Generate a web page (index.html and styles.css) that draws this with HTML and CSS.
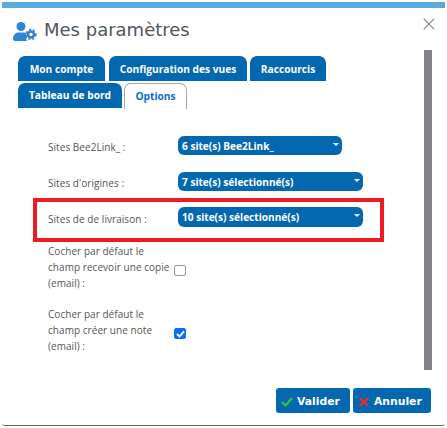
FILE: index.html
```html
<!DOCTYPE html>
<html lang="fr">
<head>
<meta charset="utf-8">
<title>Mes paramètres</title>
<link rel="stylesheet" href="styles.css">
</head>
<body>
<div class="topbar"></div>
<div class="dialog">
  <header class="head">
    <svg class="head-icon" width="24" height="19" viewBox="0 0 24 19"><circle cx="8" cy="4.500" r="4.500" fill="#2f86d6"/><path d="M0 17c0-4 2.500-6.500 5.500-6.500h5c1.300 0 2.500.4 3.400 1l-.9 1.500 1 2-.7 2.500.7 1.500H2c-1.200 0-2-.8-2-2z" fill="#2f86d6"/><circle cx="18" cy="12.500" r="3" fill="none" stroke="#2f7fc8" stroke-width="2.400"/><circle cx="18" cy="12.500" r="4.900" fill="none" stroke="#2f7fc8" stroke-width="1.500" stroke-dasharray="2.100 2.000"/></svg>
    <h1 class="title">Mes paramètres</h1>
    <svg class="close" width="12" height="12" viewBox="0 0 12 12"><path d="M.7.7l10.600 10.600M11.300.7L.7 11.300" stroke="#8a8a8a" stroke-width="1.200" fill="none"/></svg>
  </header>
  <div class="main">
    <div class="content">
      <div class="tabs">
        <div class="tab-row">
          <span class="tab w-compte">Mon compte</span>
          <span class="tab w-config">Configuration des vues</span>
          <span class="tab w-racc">Raccourcis</span>
        </div>
        <div class="tab-row">
          <span class="tab w-tableau">Tableau de bord</span>
          <span class="tab active">Options</span>
        </div>
      </div>
      <div class="form">
        <div class="row row-a"><span class="label">Sites Bee2Link_ :</span><span class="select w-short">6 site(s) Bee2Link_<i class="caret"></i></span></div>
        <div class="row row-b"><span class="label">Sites d'origines :</span><span class="select">7 site(s) sélectionné(s)<i class="caret"></i></span></div>
        <div class="row row-c"><span class="label">Sites de de livraison :</span><span class="select">10 site(s) sélectionné(s)<i class="caret"></i></span></div>
        <div class="check-row first"><span class="label multi">Cocher par défaut le<br>champ recevoir une copie<br>(email) :</span><span class="box"></span></div>
        <div class="check-row"><span class="label multi">Cocher par défaut le<br>champ créer une note<br>(email) :</span><span class="box checked"><svg width="9" height="8" viewBox="0 0 9 8"><path d="M1 4l2.500 2.500L8 1.300" stroke="#fff" stroke-width="1.800" fill="none"/></svg></span></div>
      </div>
    </div>
    <div class="scrollbar"></div>
  </div>
  <footer class="foot">
    <span class="btn btn-ok"><svg width="12" height="10" viewBox="0 0 12 10"><path d="M1 5l3.500 3.500L11 1" stroke="#35c72c" stroke-width="2" fill="none"/></svg>Valider</span>
    <span class="btn btn-no"><svg width="10" height="10" viewBox="0 0 10 10"><path d="M1 1l8 8M9 1L1 9" stroke="#f02a2a" stroke-width="2.400" fill="none"/></svg>Annuler</span>
  </footer>
</div>
</body>
</html>
```
FILE: styles.css
```css
*, *::before { box-sizing: border-box; }
html, body { margin: 0; padding: 0; }
body { width: 447px; height: 428px; background: #fff; font-family: "Open Sans", "Noto Sans", sans-serif; overflow: hidden; }
.topbar { height: 6px; margin: 2px 2px 0; background: #5aa9e2; }
.dialog { height: 418px; margin: 0 2px; border-bottom: 1px solid #666; border-radius: 0 0 3px 3px; display: flex; flex-direction: column; }
.head { height: 39px; display: flex; align-items: center; padding: 5px 0 0 11px; position: relative; }
.head-icon { margin-right: 7px; margin-top: 3px; }
.title { margin: 0; font: 400 18px/24px "DejaVu Sans", sans-serif; color: #50565c; }
.close { position: absolute; right: 10px; top: 10px; }
.main { display: flex; height: 325px; }
.content { width: 422px; padding-left: 16px; }
.tabs { display: flex; flex-direction: column; gap: 2px; padding-top: 9px; }
.tab-row { display: flex; gap: 3px; height: 25px; }
.tab { height: 25px; padding-top: 5px; background: #0468b1; color: #fff; font: 700 10.200px/17px "Open Sans", sans-serif; text-align: center; border-radius: 7px 7px 0 0; }
.tab-row + .tab-row .tab { padding-top: 4px; }
.w-compte { width: 87px; }
.w-config { width: 138px; margin-left: 1px; }
.w-racc { width: 76px; }
.w-tableau { width: 104px; }
.tab.active { width: 63px; height: 26px; margin-left: -1px; background: #fff; color: #0d6ad0; border: 1px solid #a9a59f; border-bottom: 0; }
.form { padding-left: 30px; }
.row { display: flex; align-items: center; height: 19px; }
.row-a { margin-top: 28px; }
.row-b { margin-top: 17px; }
.row-c { margin-top: 16px; height: 20px; position: relative; }
.row-c::before { content: ""; position: absolute; left: -15px; top: -9px; width: 351px; height: 44px; border: 4px solid #ed1c24; }
.label { width: 130px; flex: none; margin-top: 3px; font: 400 10px/16px "Open Sans", sans-serif; color: #555; letter-spacing: .05px; position: relative; }
.select { width: 185px; height: 100%; padding: 0 4px; position: relative; background: #0468b1; color: #fff; border-radius: 6px; font: 700 10.100px/21px "Open Sans", sans-serif; }
.w-short { width: 164px; }
.caret { position: absolute; right: 3px; top: 7px; border: 3px solid transparent; border-top: 3.500px solid #fff; border-bottom: 0; }
.check-row { display: flex; align-items: center; height: 48px; margin-top: 15px; }
.check-row.first { margin-top: 16px; }
.multi { width: 126px; margin-top: 0; }
.box { width: 12px; height: 11px; margin-top: 7px; border: 1px solid #999; border-radius: 2px; display: flex; align-items: center; justify-content: center; background: #fff; }
.box.checked { background: #0d6efd; border-color: #0d6efd; }
.scrollbar { width: 8px; height: 320px; margin-top: 3px; background: #83838f; }
.foot { flex: 1; display: flex; justify-content: flex-end; gap: 3px; padding: 16px 14px 0 0; }
.btn { height: 25px; padding-top: 2px; display: inline-flex; align-items: center; background: #0468b1; color: #fff; border-radius: 3px; font: 700 10.800px/21px "DejaVu Sans", sans-serif; }
.btn-ok { width: 74px; padding-left: 5px; gap: 4px; }
.btn-no { width: 78px; padding-left: 6px; gap: 5px; }
```
